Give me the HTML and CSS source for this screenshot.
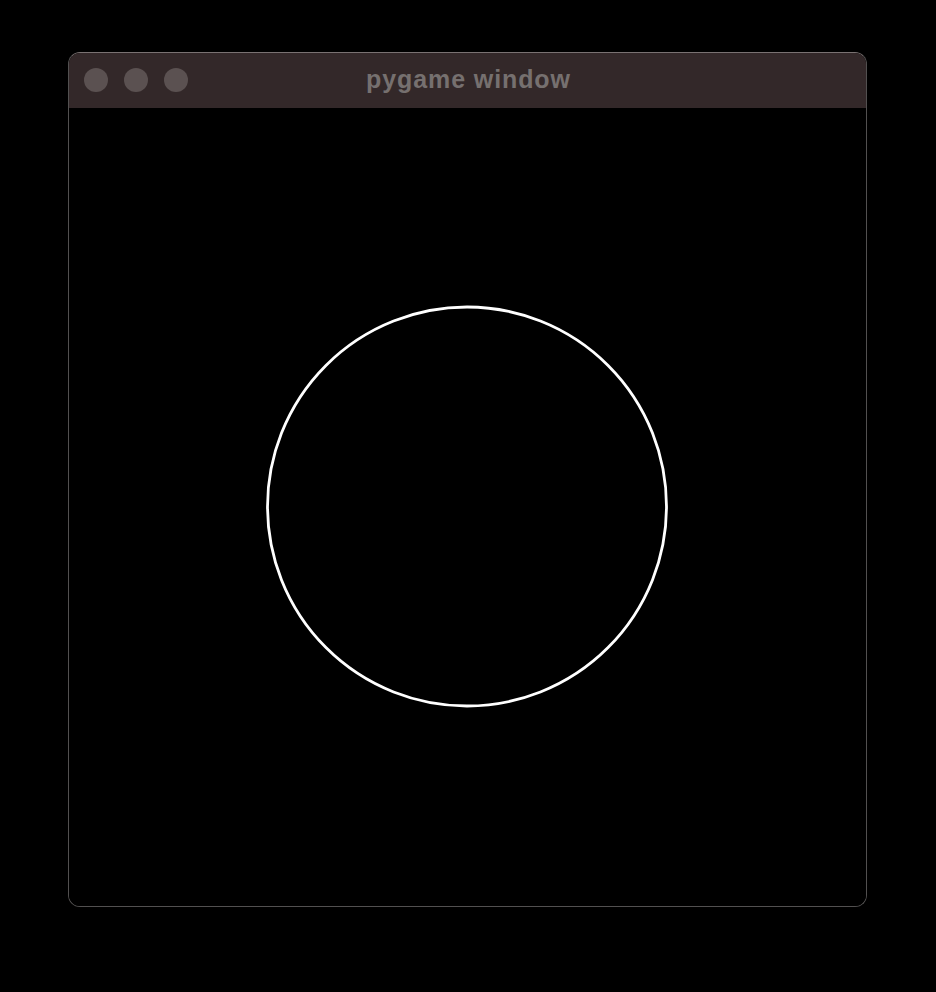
FILE: index.html
```html
<!DOCTYPE html>
<html>
<head>
<meta charset="utf-8">
<link rel="stylesheet" href="styles.css">
</head>
<body>
<div class="window">
  <div class="titlebar">
    <div class="lights">
      <span class="light"></span>
      <span class="light"></span>
      <span class="light"></span>
    </div>
    <div class="title">pygame window</div>
  </div>
  <div class="canvas">
    <svg width="797" height="798" viewBox="0 0 797 798">
      <circle cx="398" cy="398.5" r="199.5" fill="none" stroke="#ffffff" stroke-width="2.8"/>
    </svg>
  </div>
</div>
</body>
</html>
```

FILE: styles.css
```css
html, body {
  margin: 0;
  padding: 0;
  background: #000;
  width: 936px;
  height: 992px;
  overflow: hidden;
}
body {
  padding: 52px 0 0 68px;
  box-sizing: border-box;
  font-family: "Liberation Sans", Arial, sans-serif;
}
.window {
  width: 799px;
  height: 855px;
  box-sizing: border-box;
  border: 1px solid #525050;
  border-top-color: #7a7272;
  border-radius: 12px;
  overflow: hidden;
  display: flex;
  flex-direction: column;
  background: #000;
}
.titlebar {
  position: relative;
  height: 55px;
  flex: none;
  background: #332829;
  display: flex;
  align-items: center;
  justify-content: center;
}
.lights {
  position: absolute;
  left: 15px;
  top: 15px;
  display: flex;
  gap: 16px;
}
.light {
  width: 24px;
  height: 24px;
  border-radius: 50%;
  background: #5b5151;
}
.title {
  color: #76706f;
  font-weight: bold;
  font-size: 25px;
  letter-spacing: 0.9px;
  margin-top: -2px;
  margin-left: 2px;
}
.canvas {
  flex: 1;
  background: #000;
}
.canvas svg {
  display: block;
}
```
